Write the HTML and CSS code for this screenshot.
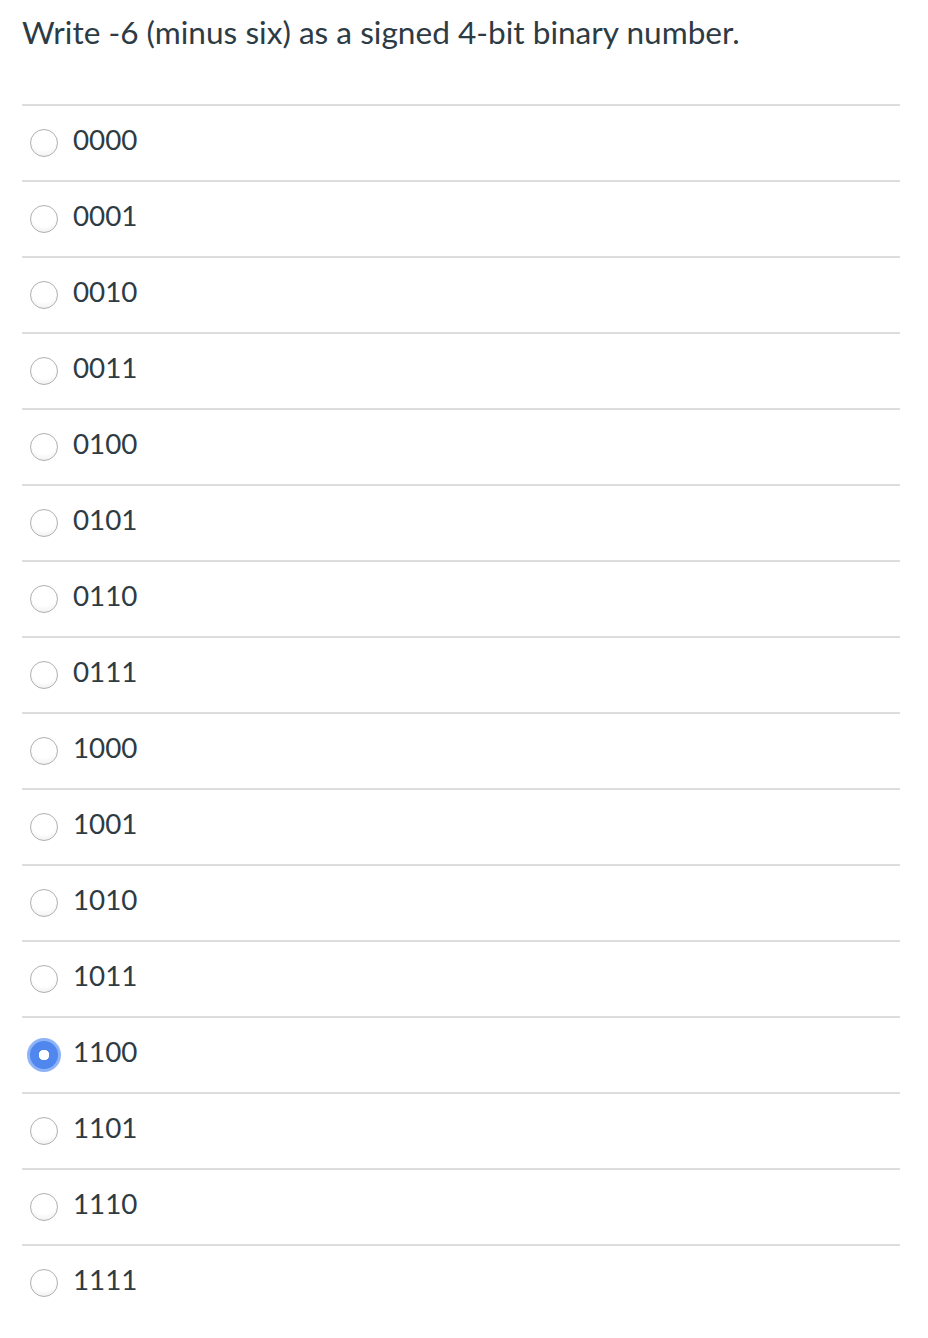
FILE: index.html
```html
<!DOCTYPE html>
<html>
<head>
<meta charset="utf-8">
<link rel="stylesheet" href="styles.css">
</head>
<body>
<div class="page">
  <h1 class="question">Write -6 (minus six) as a signed 4-bit binary number.</h1>
  <ul class="answers">
    <li class="answer"><span class="radio"></span><span class="label">0000</span></li>
    <li class="answer"><span class="radio"></span><span class="label">0001</span></li>
    <li class="answer"><span class="radio"></span><span class="label">0010</span></li>
    <li class="answer"><span class="radio"></span><span class="label">0011</span></li>
    <li class="answer"><span class="radio"></span><span class="label">0100</span></li>
    <li class="answer"><span class="radio"></span><span class="label">0101</span></li>
    <li class="answer"><span class="radio"></span><span class="label">0110</span></li>
    <li class="answer"><span class="radio"></span><span class="label">0111</span></li>
    <li class="answer"><span class="radio"></span><span class="label">1000</span></li>
    <li class="answer"><span class="radio"></span><span class="label">1001</span></li>
    <li class="answer"><span class="radio"></span><span class="label">1010</span></li>
    <li class="answer"><span class="radio"></span><span class="label">1011</span></li>
    <li class="answer"><span class="radio selected"></span><span class="label">1100</span></li>
    <li class="answer"><span class="radio"></span><span class="label">1101</span></li>
    <li class="answer"><span class="radio"></span><span class="label">1110</span></li>
    <li class="answer"><span class="radio"></span><span class="label">1111</span></li>
  </ul>
</div>
</body>
</html>
```
FILE: styles.css
```css
html, body {
  margin: 0;
  padding: 0;
  background: #fff;
}
.page {
  padding: 12px 28px 0 22px;
  font-family: Lato, "Open Sans", sans-serif;
  color: #2d3b45;
}
.question {
  font-weight: 400;
  font-size: 31.6px;
  line-height: 40px;
  margin: 0 0 52px 0;
}
.answers {
  list-style: none;
  margin: 0;
  padding: 0;
}
.answer {
  display: flex;
  align-items: center;
  height: 74px;
  border-top: 2px solid #dddddd;
}
.radio {
  box-sizing: border-box;
  width: 28px;
  height: 28px;
  margin-left: 8px;
  margin-right: 15px;
  border-radius: 50%;
  border: 1px solid #b0b0b0;
  background: radial-gradient(circle at 50% 30%, #ffffff 55%, #e8e8e8 100%);
  flex-shrink: 0;
}
.radio.selected {
  width: 34px;
  height: 34px;
  margin-left: 5px;
  margin-right: 12px;
  border: 3px solid #8fb3f7;
  background: radial-gradient(circle, #ffffff 0 5px, #4f87ef 5.5px);
}
.label {
  font-size: 27.8px;
  line-height: 34px;
  position: relative;
  top: -3px;
}
```
